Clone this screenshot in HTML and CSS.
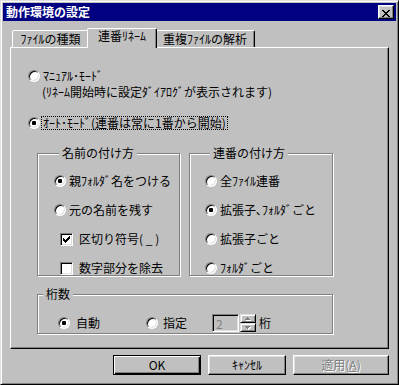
FILE: index.html
```html
<!DOCTYPE html>
<html lang="ja">
<head>
    <meta charset="UTF-8">
    <meta name="viewport" content="width=device-width, initial-scale=1.0">
    <title>動作環境の設定</title>
    <link rel="stylesheet" href="styles.css">
</head>
<body>
    <div class="window">
        <div class="titlebar">
            <span class="title">動作環境の設定</span>
            <button class="close" aria-label="閉じる">
                <svg width="8" height="7" viewBox="0 0 8 7" shape-rendering="crispEdges"><path d="M0 0h2v1H0zM6 0h2v1H6zM1 1h2v1H1zM5 1h2v1H5zM2 2h4v1H2zM3 3h2v1H3zM2 4h4v1H2zM1 5h2v1H1zM5 5h2v1H5zM0 6h2v1H0zM6 6h2v1H6z" fill="#000"/></svg>
            </button>
        </div>

        <!-- Tabs -->
        <div class="tabs">
            <div class="tab tab-types">ﾌｧｲﾙの種類</div>
            <div class="tab tab-rename active">連番ﾘﾈｰﾑ</div>
            <div class="tab tab-dups">重複ﾌｧｲﾙの解析</div>
        </div>

        <div class="panel">
            <label class="option">
                <span class="radio"></span><span class="text">ﾏﾆｭｱﾙ･ﾓｰﾄﾞ</span>
            </label>
            <p class="note">(ﾘﾈｰﾑ開始時に設定ﾀﾞｲｱﾛｸﾞが表示されます)</p>
            <label class="option mode-auto">
                <span class="radio checked"></span><span class="text focus">ｵｰﾄ･ﾓｰﾄﾞ(連番は常に1番から開始)</span>
            </label>

            <div class="groups">
                <div class="group group-naming">
                    <div class="group-title">名前の付け方</div>
                    <label class="option">
                        <span class="radio checked"></span><span class="text">親ﾌｫﾙﾀﾞ名をつける</span>
                    </label>
                    <label class="option">
                        <span class="radio"></span><span class="text">元の名前を残す</span>
                    </label>
                    <label class="option sub">
                        <span class="check"><svg width="7" height="7" viewBox="0 0 7 7" shape-rendering="crispEdges"><path d="M6 0h1v1H6zM5 1h2v1H5zM0 2h1v1H0zM4 2h3v1H4zM0 3h2v1H0zM3 3h3v1H3zM0 4h5v1H0zM1 5h3v1H1zM2 6h1v1H2z" fill="#000"/></svg></span><span class="text">区切り符号( _ )</span>
                    </label>
                    <label class="option sub">
                        <span class="check"></span><span class="text">数字部分を除去</span>
                    </label>
                </div>

                <div class="group group-serial">
                    <div class="group-title">連番の付け方</div>
                    <label class="option">
                        <span class="radio"></span><span class="text">全ﾌｧｲﾙ連番</span>
                    </label>
                    <label class="option">
                        <span class="radio checked"></span><span class="text">拡張子､ﾌｫﾙﾀﾞごと</span>
                    </label>
                    <label class="option">
                        <span class="radio"></span><span class="text">拡張子ごと</span>
                    </label>
                    <label class="option">
                        <span class="radio"></span><span class="text">ﾌｫﾙﾀﾞごと</span>
                    </label>
                </div>
            </div>

            <div class="group group-digits">
                <div class="group-title">桁数</div>
                <div class="digits-row">
                    <span class="radio checked"></span><span class="text digits-auto">自動</span>
                    <span class="radio radio-fixed"></span><span class="text digits-fixed">指定</span>
                    <span class="edit">2</span>
                    <span class="spin">
                        <span class="spin-btn">
                            <svg width="6" height="4" viewBox="0 0 6 4" shape-rendering="crispEdges"><path d="M3 1h1v1h1v1h1v1H1V3h1V2h1z" fill="#fff"/><path d="M2 0h1v1h1v1h1v1H0V2h1V1h1z" fill="#808080"/></svg>
                        </span>
                        <span class="spin-btn">
                            <svg width="6" height="4" viewBox="0 0 6 4" shape-rendering="crispEdges"><path d="M1 1h5v1H5v1H4v1H3V3H2V2H1z" fill="#fff"/><path d="M0 0h5v1H4v1H3v1H2V2H1V1H0z" fill="#808080"/></svg>
                        </span>
                    </span>
                    <span class="text digits-unit">桁</span>
                </div>
            </div>
        </div>

        <div class="buttons">
            <button class="btn btn-ok">OK</button>
            <button class="btn btn-cancel">ｷｬﾝｾﾙ</button>
            <button class="btn btn-apply" disabled>適用(<u>A</u>)</button>
        </div>
    </div>
</body>
</html>
```

FILE: styles.css
```css
* {
    margin: 0;
    padding: 0;
    box-sizing: border-box;
}

body {
    font-family: "Noto Sans CJK JP", "Noto Sans", sans-serif;
    font-size: 12px;
    line-height: 12px;
    color: #000;
    background: #c0c0c0;
}

.window {
    width: 399px;
    height: 385px;
    background: #c0c0c0;
    border: 1px solid;
    border-color: #dfdfdf #000 #000 #dfdfdf;
    box-shadow: inset 1px 1px #fff, inset -1px -1px #808080;
    padding: 2px;
    display: flex;
    flex-direction: column;
}

/* Title bar */
.titlebar {
    height: 18px;
    flex: none;
    background: #000080;
    color: #fff;
    font-weight: bold;
    display: flex;
    align-items: center;
    justify-content: space-between;
    padding: 0 2px 0 3px;
}

.close {
    width: 16px;
    height: 14px;
    background: #c0c0c0;
    border: 1px solid;
    border-color: #fff #000 #000 #fff;
    box-shadow: inset -1px -1px #808080, inset 1px 1px #dfdfdf;
}

.close svg {
    display: block;
    margin: 2px 0 0 3px;
}

/* Tabs */
.tabs {
    display: flex;
    align-items: flex-end;
    height: 19px;
    margin: 7px 7px 0;
    padding-left: 2px;
    flex: none;
}

.tab {
    height: 17px;
    padding-top: 2px;
    text-align: center;
    background: #c0c0c0;
    border: 1px solid;
    border-bottom: none;
    border-color: #fff #000 transparent #fff;
    border-radius: 2px 2px 0 0;
    box-shadow: inset -1px 0 #808080;
    white-space: nowrap;
}

.tab-types {
    width: 77px;
}

.tab-rename {
    width: 70px;
}

.tab-dups {
    width: 100px;
}

.tab.active {
    height: 20px;
    margin: 0 -2px -1px;
    padding-top: 1px;
    position: relative;
    z-index: 1;
}

/* Tab page */
.panel {
    width: 379px;
    height: 302px;
    margin-left: 7px;
    border: 1px solid;
    border-color: #fff #000 #000 #fff;
    box-shadow: inset -1px -1px #808080;
    padding: 20px 0 0 17px;
    flex: none;
}

.option {
    display: flex;
    align-items: center;
    height: 16px;
}

.text {
    white-space: nowrap;
}

.option .text {
    margin-left: 3px;
}

.note {
    height: 16px;
    line-height: 16px;
    padding-left: 14px;
}

.mode-auto {
    margin-top: 15px;
}

.focus {
    border: 1px dotted #000;
    padding: 0 1px;
    margin-left: 1px !important;
}

.radio {
    width: 12px;
    height: 12px;
    flex: none;
    border-radius: 50%;
    border: 1px solid;
    border-color: #808080 #fff #fff #808080;
    background: #fff;
    box-shadow: inset 1px 1px #000, inset -1px -1px #dfdfdf;
    display: flex;
    align-items: center;
    justify-content: center;
}

.radio.checked::after {
    content: "";
    width: 4px;
    height: 4px;
    border-radius: 1px;
    background: #000;
}

.check {
    width: 13px;
    height: 13px;
    flex: none;
    border: 1px solid;
    border-color: #808080 #fff #fff #808080;
    background: #fff;
    box-shadow: inset 1px 1px #000, inset -1px -1px #dfdfdf;
    display: flex;
    align-items: center;
    justify-content: center;
}

.check svg {
    display: block;
}

/* Group boxes */
.groups {
    display: flex;
    margin: 22px 0 0 9px;
}

.group {
    border: 1px solid #808080;
    box-shadow: inset 1px 1px #fff, 1px 1px #fff;
}

.group-title {
    display: inline-block;
    vertical-align: top;
    margin: -7px 0 0 5px;
    padding: 0 3px;
    background: #c0c0c0;
    height: 12px;
}

.group-naming {
    width: 143px;
    height: 123px;
    padding-left: 16px;
}

.group-serial {
    width: 144px;
    height: 123px;
    margin-left: 9px;
    padding-left: 15px;
}

.group .option {
    margin-top: 13px;
}

.group .group-title + .option {
    margin-top: 7px;
}

.group .option.sub {
    margin-left: 6px;
}

.sub .text {
    margin-left: 6px;
}

.group-digits {
    width: 296px;
    height: 40px;
    margin: 18px 0 0 9px;
}

.digits-row {
    display: flex;
    align-items: center;
    height: 18px;
    margin-top: 7px;
    padding-left: 20px;
}

.digits-auto {
    margin-left: 6px;
}

.radio-fixed {
    margin-left: 46px;
}

.digits-fixed {
    margin-left: 5px;
}

.edit {
    width: 27px;
    height: 18px;
    margin-left: 25px;
    padding: 3px 0 0 3px;
    color: #808080;
    background: #c0c0c0;
    border: 1px solid;
    border-color: #808080 #fff #fff #808080;
    box-shadow: inset 1px 1px #000, inset -1px -1px #dfdfdf;
}

.spin {
    display: flex;
    flex-direction: column;
    width: 16px;
    height: 18px;
    margin-left: 1px;
}

.spin-btn {
    height: 9px;
    display: flex;
    align-items: center;
    justify-content: center;
    border: 1px solid;
    border-color: #dfdfdf #000 #000 #dfdfdf;
    box-shadow: inset 1px 1px #fff, inset -1px -1px #808080;
}

.spin-btn svg {
    display: block;
}

.digits-unit {
    margin-left: 3px;
}

/* Dialog buttons */
.buttons {
    display: flex;
    justify-content: flex-end;
    gap: 7px;
    margin-top: 6px;
    padding-right: 7px;
    flex: none;
}

.btn {
    height: 20px;
    font: inherit;
    color: #000;
    background: #c0c0c0;
    border: 1px solid;
    border-color: #fff #000 #000 #fff;
    box-shadow: inset -1px -1px #808080, inset 1px 1px #dfdfdf;
}

.btn-ok {
    width: 88px;
    border-color: #000;
    box-shadow: inset 1px 1px #fff, inset -1px -1px #000, inset -2px -2px #808080;
}

.btn-cancel {
    width: 78px;
}

.btn-apply {
    width: 96px;
    color: #808080;
    text-shadow: 1px 1px #fff;
}
```
